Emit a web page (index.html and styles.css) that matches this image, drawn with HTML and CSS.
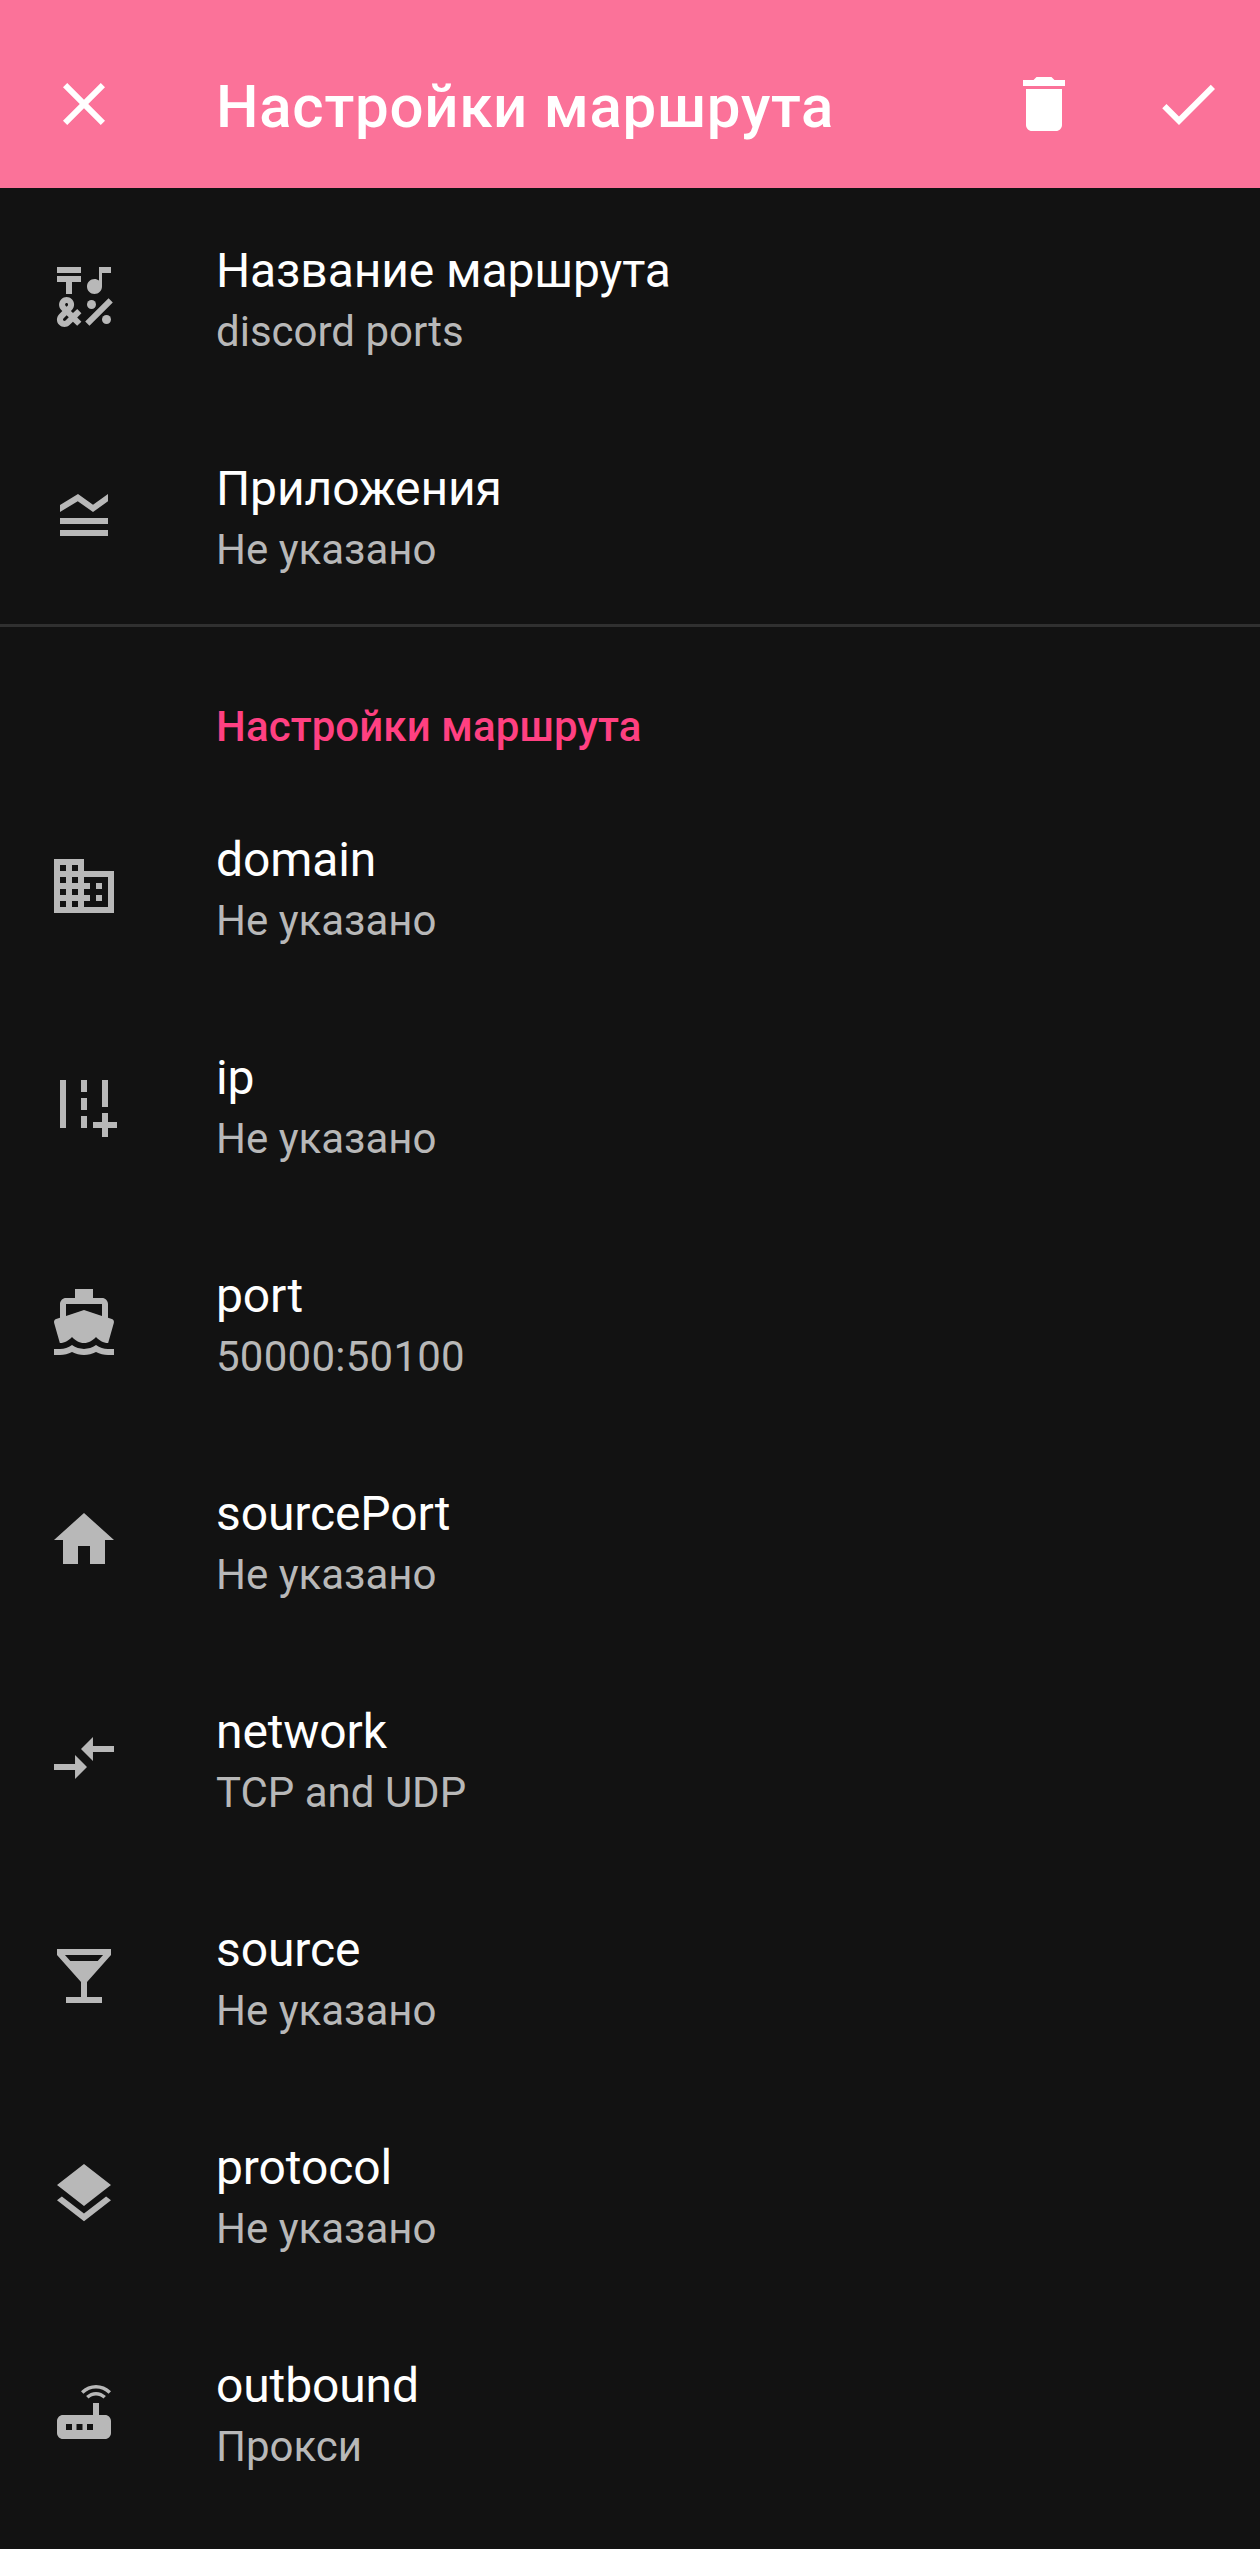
FILE: index.html
```html
<!DOCTYPE html>
<html lang="ru">
<head>
<meta charset="utf-8">
<title>Настройки маршрута</title>
<link rel="stylesheet" href="styles.css">
</head>
<body>
<header class="app-bar">
  <svg class="icon" viewBox="0 0 24 24"><path d="M19 6.41L17.59 5 12 10.59 6.41 5 5 6.41 10.59 12 5 17.59 6.41 19 12 13.41 17.59 19 19 17.59 13.41 12z"/></svg>
  <h1 class="app-title">Настройки маршрута</h1>
  <div class="actions">
    <svg class="icon" viewBox="0 0 24 24"><path d="M6 19c0 1.1.9 2 2 2h8c1.1 0 2-.9 2-2V7H6v12zM19 4h-3.5l-1-1h-5l-1 1H5v2h14V4z"/></svg>
    <svg class="icon" viewBox="0 0 24 24"><path d="M9 16.17L4.83 12l-1.42 1.41L9 19 21 7l-1.41-1.41z"/></svg>
  </div>
</header>
<main>
  <section class="group">
    <div class="row">
      <svg class="icon" viewBox="0 0 24 24"><path d="M3 2h8v2H3zM6 11h2V7h3V5H3v2h3zM12.404 20.182l7.778-7.778 1.414 1.414-7.778 7.778z"/><circle cx="14.5" cy="14.5" r="1.5"/><circle cx="19.5" cy="19.5" r="1.5"/><path d="M15.5 11c1.38 0 2.5-1.12 2.5-2.5V4h3V2h-4v4.51c-.42-.32-.93-.51-1.5-.51-1.38 0-2.5 1.12-2.5 2.5s1.12 2.5 2.5 2.5z"/><path d="M9.74 15.96l-1.41 1.41-.71-.71.35-.35c.98-.98.98-2.56 0-3.54-.49-.49-1.13-.73-1.77-.73-.64 0-1.28.24-1.77.73-.98.98-.98 2.56 0 3.54l.35.35-1.06 1.06c-.98.98-.98 2.56 0 3.54.49.5 1.13.74 1.77.74s1.28-.24 1.77-.73l1.06-1.06 1.41 1.41 1.41-1.41-1.41-1.41 1.41-1.41-1.4-1.43zm-3.89-1.77c.12-.12.26-.15.35-.15s.23.03.35.15c.19.2.19.51 0 .71l-.35.35-.35-.36c-.19-.2-.19-.51 0-.7zm0 5.65c-.12.12-.26.15-.35.15s-.23-.03-.35-.15c-.19-.19-.19-.51 0-.71l1.06-1.06.71.71-1.07 1.06z"/></svg>
      <div class="text"><div class="title">Название маршрута</div><div class="summary">discord ports</div></div>
    </div>
    <div class="row">
      <svg class="icon" viewBox="0 0 24 24"><path d="M20 15H4v-2h16v2zM20 17H4v2h16v-2zM15 11l5-3.55V5l-5 3.55L10 5 4 8.66V11l5.92-3.61L15 11z"/></svg>
      <div class="text"><div class="title">Приложения</div><div class="summary">Не указано</div></div>
    </div>
  </section>
  <section class="group group-divided">
    <h2 class="category">Настройки маршрута</h2>
    <div class="row">
      <svg class="icon" viewBox="0 0 24 24"><path d="M12 7V3H2v18h20V7H12zM6 19H4v-2h2v2zm0-4H4v-2h2v2zm0-4H4V9h2v2zm0-4H4V5h2v2zm4 12H8v-2h2v2zm0-4H8v-2h2v2zm0-4H8V9h2v2zm0-4H8V5h2v2zm10 12h-8v-2h2v-2h-2v-2h2v-2h-2V9h8v10zm-2-8h-2v2h2v-2zm0 4h-2v2h2v-2z"/></svg>
      <div class="text"><div class="title">domain</div><div class="summary">Не указано</div></div>
    </div>
    <div class="row">
      <svg class="icon" viewBox="0 0 24 24"><path d="M20 18v-3h-2v3h-3v2h3v3h2v-3h3v-2zM18 4h2v9h-2zM4 4h2v16H4zM11 4h2v4h-2zM11 10h2v4h-2zM11 16h2v4h-2z"/></svg>
      <div class="text"><div class="title">ip</div><div class="summary">Не указано</div></div>
    </div>
    <div class="row">
      <svg class="icon" viewBox="0 0 24 24"><path d="M20 21c-1.39 0-2.78-.47-4-1.32-2.44 1.71-5.56 1.71-8 0C6.78 20.53 5.39 21 4 21H2v2h2c1.38 0 2.74-.35 4-.99 2.52 1.29 5.48 1.29 8 0 1.26.65 2.62.99 4 .99h2v-2h-2zM3.95 19H4c1.6 0 3.02-.88 4-2 .98 1.12 2.4 2 4 2s3.02-.88 4-2c.98 1.12 2.4 2 4 2h.05l1.89-6.68c.08-.26.06-.54-.06-.78s-.34-.42-.6-.5L20 10.62V6c0-1.1-.9-2-2-2h-3V1H9v3H6c-1.1 0-2 .9-2 2v4.62l-1.29.42c-.26.08-.48.26-.6.5s-.15.52-.06.78L3.95 19zM6 6h12v3.97L12 8 6 9.97V6z"/></svg>
      <div class="text"><div class="title">port</div><div class="summary summary-numeric">50000:50100</div></div>
    </div>
    <div class="row">
      <svg class="icon" viewBox="0 0 24 24"><path d="M10 20v-6h4v6h5v-8h3L12 3 2 12h3v8z"/></svg>
      <div class="text"><div class="title">sourcePort</div><div class="summary">Не указано</div></div>
    </div>
    <div class="row">
      <svg class="icon" viewBox="0 0 24 24"><path d="M9.01 14H2v2h7.01v3L13 15l-3.99-4v3zm5.98-1v-3H22V8h-7.01V5L11 9l3.99 4z"/></svg>
      <div class="text"><div class="title">network</div><div class="summary">TCP and UDP</div></div>
    </div>
    <div class="row">
      <svg class="icon" viewBox="0 0 24 24"><path d="M21 5V3H3v2l8 9v5H6v2h12v-2h-5v-5l8-9zM7.43 7L5.66 5h12.69l-1.78 2H7.43z"/></svg>
      <div class="text"><div class="title">source</div><div class="summary">Не указано</div></div>
    </div>
    <div class="row">
      <svg class="icon" viewBox="0 0 24 24"><path d="M11.99 18.54l-7.37-5.73L3 14.07l9 7 9-7-1.63-1.27-7.38 5.74zM12 16l7.36-5.73L21 9l-9-7-9 7 1.63 1.27L12 16z"/></svg>
      <div class="text"><div class="title">protocol</div><div class="summary">Не указано</div></div>
    </div>
    <div class="row">
      <svg class="icon" viewBox="0 0 24 24"><path d="M20.2 5.9l.8-.8C19.6 3.7 17.8 3 16 3s-3.6.7-5 2.1l.8.8C13 4.8 14.5 4.2 16 4.2s3 .6 4.2 1.7zm-.9.8c-.9-.9-2.1-1.4-3.3-1.4s-2.4.5-3.3 1.4l.8.8c.7-.7 1.6-1 2.5-1 .9 0 1.8.3 2.5 1l.8-.8zM19 13h-2V9h-2v4H5c-1.1 0-2 .9-2 2v4c0 1.1.9 2 2 2h14c1.1 0 2-.9 2-2v-4c0-1.1-.9-2-2-2zM8 18H6v-2h2v2zm3.5 0h-2v-2h2v2zm3.5 0h-2v-2h2v2z"/></svg>
      <div class="text"><div class="title">outbound</div><div class="summary">Прокси</div></div>
    </div>
  </section>
</main>
</body>
</html>
```
FILE: styles.css
```css
* {
  box-sizing: border-box;
}

body {
  margin: 0;
  min-height: 2549px;
  background: #121212;
  color: #fff;
  font-family: Roboto, "Noto Sans", sans-serif;
}

.icon {
  flex: none;
  width: 72px;
  height: 72px;
  fill: currentColor;
}

.app-bar {
  display: flex;
  align-items: center;
  height: 188px;
  padding: 20px 36px 0 48px;
  background: #fb7299;
}

.app-title {
  flex: 1;
  margin: 0;
  padding: 5px 0 0 96px;
  font-size: 60px;
  font-weight: 500;
  letter-spacing: 0.72px;
  line-height: 72px;
}

.actions {
  display: flex;
  gap: 72px;
}

.group-divided {
  border-top: 3px solid #303030;
}

.category {
  height: 150px;
  margin: 0;
  padding: 72px 0 0 216px;
  color: #ff4081;
  font-size: 42px;
  font-weight: 500;
  letter-spacing: 0.1px;
  line-height: 56px;
}

.row {
  display: flex;
  align-items: center;
  gap: 96px;
  height: 218px;
  padding: 0 48px;
}

.row .icon {
  color: #b8b8b8;
}

.text {
  padding-top: 4px;
}

.title {
  font-size: 48px;
  letter-spacing: -0.12px;
  line-height: 64px;
}

.summary {
  color: #b8b8b8;
  font-size: 42px;
  line-height: 57px;
}

.summary-numeric {
  letter-spacing: 0.25px;
}
```
